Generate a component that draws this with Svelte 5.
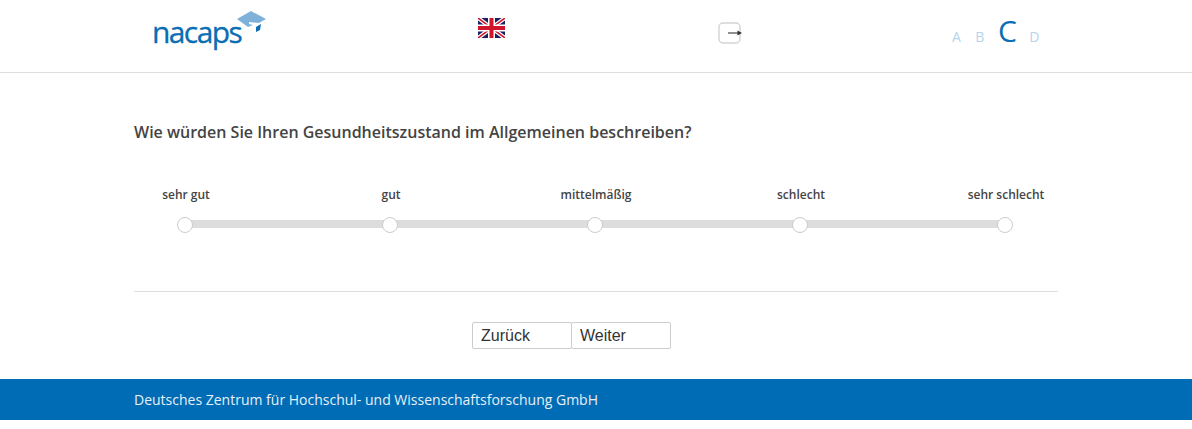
<script>
  const options = ["sehr gut", "gut", "mittelmäßig", "schlecht", "sehr schlecht"]
  const sizes = [
    { label: "A", active: false },
    { label: "B", active: false },
    { label: "C", active: true },
    { label: "D", active: false }
  ]
</script>

<div class="page">
  <header class="top">
    <div class="logo">
      <span class="logo-text">nacaps</span>
      <svg class="logo-cap" width="32" height="26" viewBox="0 0 32 26">
        <path d="M2 11 L16 3 L31 11 L24 15 L14 14 L14 16 L18 17 L13 19 Z" fill="#7fb2da" />
        <path d="M21 19 L26 16 L25 22 L21 24 Z" fill="#0a6eb4" />
      </svg>
    </div>

    <svg class="flag" width="27" height="20" viewBox="0 0 27 20">
      <rect width="27" height="20" fill="#1a1f5e" />
      <path d="M0 0 L27 20 M27 0 L0 20" stroke="#fff" stroke-width="4" />
      <path d="M0 0 L27 20 M27 0 L0 20" stroke="#cf142b" stroke-width="1.5" />
      <path d="M13.5 0 V20 M0 10 H27" stroke="#fff" stroke-width="7" />
      <path d="M13.5 0 V20 M0 10 H27" stroke="#cf142b" stroke-width="4" />
    </svg>

    <svg class="logout" width="25" height="22" viewBox="0 0 25 22">
      <rect x="1" y="1" width="21" height="20" rx="4" fill="none" stroke="#d4d4d4" stroke-width="1.4" />
      <path d="M10 11 H20" stroke="#444" stroke-width="1.2" />
      <path d="M19.5 8.5 L24 11 L19.5 13.5 Z" fill="#333" />
    </svg>

    <div class="sizes">
      {#each sizes as s}
        <span class:active={s.active}>{s.label}</span>
      {/each}
    </div>
  </header>

  <main class="content">
    <h1>Wie würden Sie Ihren Gesundheitszustand im Allgemeinen beschreiben?</h1>

    <div class="scale">
      {#each options as o}
        <div class="option">
          <span class="label">{o}</span>
          <span class="knob"></span>
        </div>
      {/each}
    </div>

    <hr />

    <div class="buttons">
      <button>Zurück</button>
      <button>Weiter</button>
    </div>
  </main>

  <footer class="bottom">
    <span>Deutsches Zentrum für Hochschul- und Wissenschaftsforschung GmbH</span>
  </footer>
</div>

<style>
  :global(body) {
    background: #fff;
    font-family: "Open Sans", sans-serif;
    color: #444;
  }

  .top {
    height: 72px;
    border-bottom: 1px solid #ddd;
    display: grid;
    grid-template-columns: 478px 240px 234px 1fr;
  }

  .logo {
    position: relative;
    padding: 12px 0 0 152px;
  }

  .logo-text {
    display: block;
    font-size: 30px;
    line-height: 40px;
    letter-spacing: -1.6px;
    color: #0a6eb4;
    -webkit-text-stroke: 0.3px #0a6eb4;
  }

  .logo-cap {
    position: absolute;
    left: 235px;
    top: 8px;
  }

  .flag {
    grid-column: 2;
    margin-top: 18px;
    display: block;
  }

  .logout {
    grid-column: 3;
    margin-top: 22px;
    display: block;
  }

  .sizes {
    grid-column: 4;
    display: flex;
    align-items: baseline;
    gap: 14.5px;
    height: 48px;
    line-height: 62px;
    font-size: 14px;
    color: #b3d4ec;
  }

  .sizes .active {
    font-size: 30px;
    color: #0a6eb4;
    margin: 0 -2px 0 -1px;
  }

  .content {
    width: 924px;
    margin: 0 auto;
  }

  h1 {
    margin: 48px 0 0;
    font-size: 16px;
    line-height: 22px;
    font-weight: 600;
    color: #444;
  }

  .scale {
    margin: 43px 0 0 -52px;
    width: 1025px;
    display: flex;
    position: relative;
  }

  .scale::before {
    content: "";
    position: absolute;
    left: 102px;
    right: 102px;
    top: 34px;
    height: 8px;
    background: #ddd;
  }

  .option {
    flex: 1;
    display: flex;
    flex-direction: column;
    align-items: center;
    position: relative;
  }

  .label {
    font-size: 12px;
    line-height: 18px;
    font-weight: 600;
    color: #444;
    margin-bottom: 13px;
    padding-left: 3px;
  }

  .knob {
    width: 16px;
    height: 16px;
    box-sizing: border-box;
    border-radius: 50%;
    border: 1px solid #ccc;
    background: #fff;
  }

  hr {
    border: 0;
    border-top: 1px solid #ddd;
    margin: 58px 0 0;
  }

  .buttons {
    display: flex;
    justify-content: center;
    margin-top: 30px;
    padding-right: 50px;
  }

  button {
    width: 100px;
    height: 27px;
    padding: 0 8px 0 8.5px;
    text-align: left;
    font-family: "Liberation Sans", sans-serif;
    font-size: 16px;
    color: #333;
    background: #fff;
    border: 1px solid #ccc;
    border-radius: 2px;
  }

  button + button {
    margin-left: -1px;
  }

  .bottom {
    margin-top: 30px;
    height: 41px;
    line-height: 41px;
    background: #006cb5;
    color: #e6f0f8;
    font-size: 14px;
    padding-left: 134px;
  }
</style>
